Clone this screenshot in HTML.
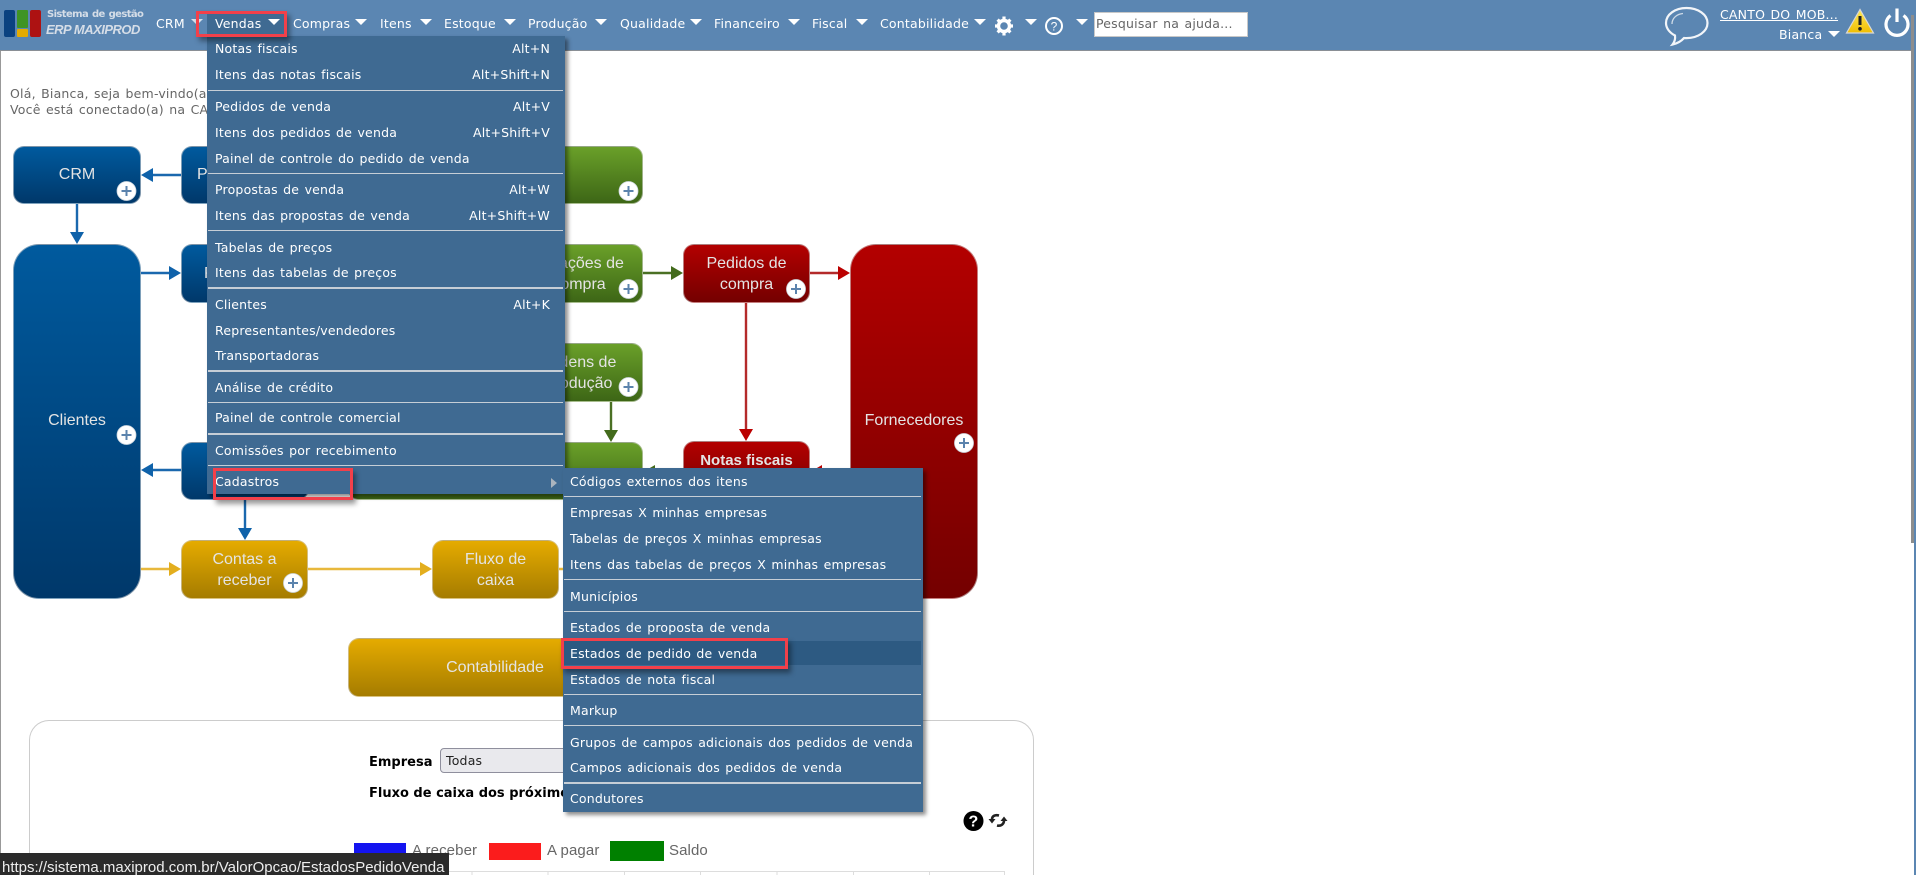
<!DOCTYPE html>
<html lang="pt-BR"><head><meta charset="utf-8"><title>ERP MAXIPROD</title>
<style>
html,body{margin:0;padding:0;width:1916px;height:875px;overflow:hidden;background:#fff}
body{position:relative;font-family:"DejaVu Sans","Liberation Sans",sans-serif;font-size:12.5px;letter-spacing:.2px;word-spacing:1.2px;color:#666}
.a{position:absolute;white-space:nowrap}
.t{position:absolute;white-space:nowrap;line-height:16px;height:16px;margin-top:-8px}
.nav{color:#fff}
.car{position:absolute;width:0;height:0;border-left:6px solid transparent;border-right:6px solid transparent;border-top:6px solid #fff;margin-left:-6px}
.m{position:absolute;background:#3f6a92;box-shadow:3px 3px 4px rgba(0,0,0,.45)}
.s{position:absolute;height:1px;background:#c6ced6}
.rb{position:absolute;box-sizing:border-box;border:3px solid #f2404a;box-shadow:3px 4px 5px rgba(0,0,0,.4)}
.b{position:absolute;box-sizing:border-box;border-radius:11px;color:#e4e4e4;font-family:"Liberation Sans",Arial,sans-serif;font-size:16px;letter-spacing:0;word-spacing:0;text-align:center;line-height:21px;border:1px solid rgba(210,210,210,.6)}
.blue{background:linear-gradient(#005a9e,#00386a)}
.green{background:linear-gradient(#6aa029,#3d6616)}
.red{background:linear-gradient(#b30000,#740000)}
.gold{background:linear-gradient(#e5ab00,#a57c00)}
.ln{position:absolute;font-size:15px;letter-spacing:.1px;word-spacing:0;font-family:"Liberation Sans",sans-serif;color:#666;line-height:20px;white-space:nowrap}
.bd{color:#000;font-weight:bold;font-size:13px;letter-spacing:0;word-spacing:0}
</style></head><body>

<!-- page frame -->
<div class="a" style="left:0;top:50px;width:1px;height:825px;background:#999"></div>

<!-- greeting -->
<div class="t" style="left:10px;top:94px">Olá, Bianca, seja bem-vindo(a)</div>
<div class="t" style="left:10px;top:110px">Você está conectado(a) na CANTO</div>

<!-- arrows -->
<svg class="a" style="left:0;top:0" width="1100" height="720" xmlns="http://www.w3.org/2000/svg">
<g fill="none" stroke-width="2.4">
<g stroke="#1a68ae">
<path d="M181 175H150M77 204V234M141 273H172M181 470H150M245 500V530"/>
</g>
<path stroke="#e8b83c" d="M141 569H172M308 569H423M559 569H600"/>
<path stroke="#4a7024" d="M643 273H674M611 402V432M683 472H652"/>
<path stroke="#b42a2a" d="M810 273H841M746 303V431M850 472H819"/>
</g>
<g fill="#0f62aa">
<path d="M141 175L153 168V182ZM77 244L70 232H84ZM181 273L169 266V280ZM141 470L153 463V477ZM245 540L238 528H252Z"/>
</g>
<path fill="#e3ae1e" d="M181 569L169 562V576ZM432 569L420 562V576Z"/>
<path fill="#436b1c" d="M683 273L671 266V280ZM611 442L604 430H618ZM643 472L655 465V479Z"/>
<path fill="#bb0000" d="M850 273L838 266V280ZM746 441L739 429H753ZM810 472L822 465V479Z"/>
</svg>

<!-- diagram boxes -->
<div class="b blue" style="left:13px;top:146px;width:128px;height:58px;line-height:56px">CRM</div>
<div class="b blue" style="left:181px;top:146px;width:128px;height:58px;line-height:56px;text-align:left;padding-left:15px">Propostas</div>
<div class="b green" style="left:348px;top:146px;width:295px;height:58px"></div>
<div class="b blue" style="left:13px;top:244px;width:128px;height:355px;border-radius:26px;line-height:352px">Clientes</div>
<div class="b blue" style="left:181px;top:244px;width:128px;height:59px;line-height:57px;text-align:left;padding-left:22px">Pedidos</div>
<div class="b green" style="left:515px;top:244px;width:128px;height:59px;padding-top:8px">Cotações de<br>compra</div>
<div class="b red" style="left:683px;top:244px;width:127px;height:59px;padding-top:8px">Pedidos de<br>compra</div>
<div class="b red" style="left:850px;top:244px;width:128px;height:355px;border-radius:26px;line-height:352px">Fornecedores</div>
<div class="b green" style="left:515px;top:343px;width:128px;height:59px;padding-top:8px">Ordens de<br>produção</div>
<div class="b blue" style="left:181px;top:442px;width:128px;height:58px"></div>
<div class="b green" style="left:348px;top:442px;width:295px;height:58px"></div>
<div class="b red" style="left:683px;top:441px;width:127px;height:59px;padding-top:8px;font-weight:bold;font-size:15px">Notas fiscais</div>
<div class="b gold" style="left:181px;top:540px;width:127px;height:59px;padding-top:8px">Contas a<br>receber</div>
<div class="b gold" style="left:432px;top:540px;width:127px;height:59px;padding-top:8px">Fluxo de<br>caixa</div>
<div class="b gold" style="left:348px;top:638px;width:294px;height:59px;line-height:57px">Contabilidade</div>

<!-- plus badges -->
<svg class="a" style="left:0;top:0" width="1100" height="620" xmlns="http://www.w3.org/2000/svg">
<defs><g id="p"><circle r="9.5" fill="#fff" stroke="#cfd8e0" stroke-width=".8"/><path d="M-5 0H5M0 -5V5" stroke="#5b83ad" stroke-width="2"/></g></defs>
<use href="#p" x="126.5" y="191"/><use href="#p" x="628.5" y="191"/><use href="#p" x="628.5" y="289"/>
<use href="#p" x="796" y="289"/><use href="#p" x="628.5" y="387"/><use href="#p" x="126.5" y="435"/>
<use href="#p" x="293" y="583"/><use href="#p" x="964" y="443"/>
</svg>

<!-- card -->
<div class="a" style="left:29px;top:720px;width:1005px;height:155px;box-sizing:border-box;border:1px solid #ccc;border-bottom:none;border-radius:20px 20px 0 0;background:#fff"></div>
<div class="t bd" style="left:369px;top:763px">Empresa</div>
<div class="a" style="left:440px;top:748px;width:180px;height:25px;box-sizing:border-box;background:#e9e9ed;border:1px solid #8f8f9d;border-radius:4px"></div>
<div class="t" style="left:446px;top:761px;color:#222">Todas</div>
<div class="t bd" style="left:369px;top:794px">Fluxo de caixa dos próximos</div>
<svg class="a" style="left:962px;top:810px" width="48" height="24" xmlns="http://www.w3.org/2000/svg">
<circle cx="11.5" cy="11" r="10" fill="#000"/>
<text x="11.5" y="16.5" text-anchor="middle" font-family="Liberation Sans" font-weight="bold" font-size="16" fill="#fff">?</text>
<path d="M30 9.500C30 6 33 4.500 37 5.500M42 10.500C42 14 39 16.500 35 15.500" fill="none" stroke="#222" stroke-width="2.600"/>
<path d="M26.500 9H33.500L30 13.500ZM38.500 11H45.500L42 6.500Z" fill="#222"/>
</svg>
<div class="a" style="left:354px;top:843px;width:52px;height:18px;background:#1414f0"></div>
<div class="ln" style="left:412px;top:841px">A receber</div>
<div class="a" style="left:489px;top:843px;width:52px;height:17px;background:#fb1c1c"></div>
<div class="ln" style="left:547px;top:841px">A pagar</div>
<div class="a" style="left:610px;top:841px;width:54px;height:20px;background:#008000"></div>
<div class="ln" style="left:669px;top:841px">Saldo</div>
<div class="a" style="left:396px;top:871px;width:609px;height:4px;border-top:1px solid #ddd;background:repeating-linear-gradient(90deg,#ddd 0,#ddd 1px,transparent 1px,transparent 76.3px);background-position:-1px 0;box-sizing:border-box"></div>

<!-- header -->
<div class="a" style="left:0;top:0;width:1916px;height:51px;background:#5b86b2;border-bottom:1px solid #8a8f95;box-sizing:border-box"></div>
<svg class="a" style="left:3px;top:9px" width="40" height="30" xmlns="http://www.w3.org/2000/svg">
<rect x="1" y="1" width="11" height="27" rx="2" fill="#0b4280"/>
<rect x="14" y="1" width="11" height="18" rx="1" fill="#3f9424"/>
<rect x="14" y="20" width="11" height="8" rx="1" fill="#e5ab00"/>
<rect x="27" y="1" width="11" height="27" rx="2" fill="#ad1212"/>
</svg>
<div class="t" style="left:47px;top:15px;color:#d5dde7;font-weight:bold;font-size:10px;letter-spacing:-.6px;word-spacing:1px">Sistema de gestão</div>
<div class="t" style="left:46px;top:30px;color:#d5dde7;font-weight:bold;font-style:italic;font-size:13px;letter-spacing:-.5px;word-spacing:0;font-family:'Liberation Sans',sans-serif">ERP MAXIPROD</div>

<div class="t nav" style="left:156px;top:24px">CRM</div><div class="car" style="left:197px;top:19px;opacity:.75"></div>
<div class="a" style="left:207px;top:13px;width:77px;height:24px;background:#3f6a92"></div>
<div class="t nav" style="left:215px;top:24px">Vendas</div><div class="car" style="left:274px;top:19px"></div>
<div class="t nav" style="left:293px;top:24px">Compras</div><div class="car" style="left:361px;top:19px"></div>
<div class="t nav" style="left:380px;top:24px">Itens</div><div class="car" style="left:426px;top:19px"></div>
<div class="t nav" style="left:444px;top:24px">Estoque</div><div class="car" style="left:510px;top:19px"></div>
<div class="t nav" style="left:528px;top:24px">Produção</div><div class="car" style="left:601px;top:19px"></div>
<div class="t nav" style="left:620px;top:24px">Qualidade</div><div class="car" style="left:696px;top:19px"></div>
<div class="t nav" style="left:714px;top:24px">Financeiro</div><div class="car" style="left:794px;top:19px"></div>
<div class="t nav" style="left:812px;top:24px">Fiscal</div><div class="car" style="left:862px;top:19px"></div>
<div class="t nav" style="left:880px;top:24px">Contabilidade</div><div class="car" style="left:980px;top:19px"></div>
<svg class="a" style="left:994px;top:15px" width="20" height="22" xmlns="http://www.w3.org/2000/svg">
<circle cx="10" cy="11" r="5.500" fill="none" stroke="#fff" stroke-width="3.400"/>
<path d="M10 1.500V5M10 17V20.500M1 11H4.500M15.500 11H19M3.600 4.600L6 7M14 15L16.400 17.400M16.400 4.600L14 7M6 15L3.600 17.400" stroke="#fff" stroke-width="3.200"/>
</svg>
<div class="car" style="left:1031px;top:19px"></div>
<svg class="a" style="left:1044px;top:15px" width="20" height="22" xmlns="http://www.w3.org/2000/svg">
<circle cx="10" cy="11" r="8" fill="none" stroke="#fff" stroke-width="2"/>
<text x="10" y="15.500" text-anchor="middle" font-family="Liberation Sans" font-size="12" fill="#fff">?</text>
</svg>
<div class="car" style="left:1082px;top:19px"></div>
<div class="a" style="left:1094px;top:12px;width:154px;height:25px;box-sizing:border-box;background:#fff;border:1px solid #c8c8c8"></div>
<div class="t" style="left:1096px;top:24px;color:#666">Pesquisar na ajuda...</div>

<svg class="a" style="left:1663px;top:5px" width="47" height="42" xmlns="http://www.w3.org/2000/svg">
<path d="M23.500 3C12 3 3 9.500 3 18C3 23.500 7 28 12 30.500C12.500 34 11.500 37 9.500 39.500C14 38.500 18 36.500 21 33C22 33.100 23 33.100 23.500 33.100C35 33.100 44.500 26.500 44.500 18C44.500 9.500 35 3 23.500 3Z" fill="none" stroke="#fff" stroke-width="2.200" opacity=".92"/>
<path d="M9 19C9 13 14 9 20 8.500" fill="none" stroke="#fff" stroke-width="1.300" opacity=".7"/>
</svg>
<div class="t" style="left:1720px;top:15px;color:#fff;text-decoration:underline">CANTO DO MOB...</div>
<div class="t" style="left:1779px;top:35px;color:#fff">Bianca</div>
<div class="car" style="left:1834px;top:31px"></div>
<svg class="a" style="left:1845px;top:8px" width="30" height="26" xmlns="http://www.w3.org/2000/svg">
<defs><linearGradient id="w" x1="0" y1="0" x2="0" y2="1"><stop offset="0" stop-color="#ffe95a"/><stop offset="1" stop-color="#f0bd00"/></linearGradient></defs>
<path d="M15 1.500L1.500 25H28.500Z" fill="url(#w)" stroke="#d8d8d8" stroke-width="1.200"/>
<path d="M15 8V17" stroke="#222" stroke-width="3"/><circle cx="15" cy="20.800" r="1.800" fill="#222"/>
</svg>
<svg class="a" style="left:1883px;top:7px" width="28" height="30" xmlns="http://www.w3.org/2000/svg">
<path d="M7.500 8.500A11 11 0 1 0 20.500 8.500" fill="none" stroke="#fff" stroke-width="3.200"/>
<path d="M14 1.500V15" stroke="#fff" stroke-width="3.200"/>
</svg>

<!-- right edge -->
<div class="a" style="left:1914px;top:0;width:2px;height:875px;background:#5b86b2"></div>
<div class="a" style="left:1911px;top:15px;width:3px;height:528px;background:#8d8d8d"></div>

<!-- status bar -->
<div class="a" style="left:0;top:853px;width:449px;height:22px;background:#2b2b2b;overflow:hidden">
<div class="a" style="left:2px;top:5px;color:#eee;letter-spacing:0;word-spacing:0;font:15px/20px 'Liberation Sans',sans-serif">https://sistema.maxiprod.com.br/ValorOpcao/EstadosPedidoVenda</div>
</div>

<!-- main menu -->
<div class="m" style="left:207px;top:36px;width:358px;height:458px"></div>
<div class="a" style="left:0;top:0;width:570px;height:500px;color:#fff">
<span class="t" style="left:215px;top:49px">Notas fiscais</span><span class="t" style="right:20px;top:49px">Alt+N</span>
<span class="t" style="left:215px;top:75px">Itens das notas fiscais</span><span class="t" style="right:20px;top:75px">Alt+Shift+N</span>
<div class="s" style="left:208px;top:90px;width:355px"></div>
<span class="t" style="left:215px;top:107px">Pedidos de venda</span><span class="t" style="right:20px;top:107px">Alt+V</span>
<span class="t" style="left:215px;top:133px">Itens dos pedidos de venda</span><span class="t" style="right:20px;top:133px">Alt+Shift+V</span>
<span class="t" style="left:215px;top:159px">Painel de controle do pedido de venda</span>
<div class="s" style="left:208px;top:173px;width:355px"></div>
<span class="t" style="left:215px;top:190px">Propostas de venda</span><span class="t" style="right:20px;top:190px">Alt+W</span>
<span class="t" style="left:215px;top:216px">Itens das propostas de venda</span><span class="t" style="right:20px;top:216px">Alt+Shift+W</span>
<div class="s" style="left:208px;top:230px;width:355px"></div>
<span class="t" style="left:215px;top:248px">Tabelas de preços</span>
<span class="t" style="left:215px;top:273px">Itens das tabelas de preços</span>
<div class="s" style="left:208px;top:287px;width:355px;height:2px"></div>
<span class="t" style="left:215px;top:305px">Clientes</span><span class="t" style="right:20px;top:305px">Alt+K</span>
<span class="t" style="left:215px;top:331px">Representantes/vendedores</span>
<span class="t" style="left:215px;top:356px">Transportadoras</span>
<div class="s" style="left:208px;top:370px;width:355px;height:2px"></div>
<span class="t" style="left:215px;top:388px">Análise de crédito</span>
<div class="s" style="left:208px;top:402px;width:355px"></div>
<span class="t" style="left:215px;top:418px">Painel de controle comercial</span>
<div class="s" style="left:208px;top:433px;width:355px;height:2px"></div>
<span class="t" style="left:215px;top:451px">Comissões por recebimento</span>
<div class="s" style="left:208px;top:465px;width:355px"></div>
<span class="t" style="left:215px;top:482px">Cadastros</span>
<div class="a" style="left:551px;top:478px;width:0;height:0;border-left:6px solid #aab4be;border-top:5px solid transparent;border-bottom:5px solid transparent"></div>
</div>

<!-- submenu -->
<div class="m" style="left:563px;top:468px;width:360px;height:344px"></div>
<div class="a" style="left:0;top:0;width:923px;height:812px;color:#fff">
<div class="a" style="left:564px;top:641px;width:357px;height:24px;background:#2d5a82"></div>
<span class="t" style="left:570px;top:482px">Códigos externos dos itens</span>
<div class="s" style="left:564px;top:496px;width:357px"></div>
<span class="t" style="left:570px;top:513px">Empresas X minhas empresas</span>
<span class="t" style="left:570px;top:539px">Tabelas de preços X minhas empresas</span>
<span class="t" style="left:570px;top:565px">Itens das tabelas de preços X minhas empresas</span>
<div class="s" style="left:564px;top:579px;width:357px"></div>
<span class="t" style="left:570px;top:597px">Municípios</span>
<div class="s" style="left:564px;top:611px;width:357px"></div>
<span class="t" style="left:570px;top:628px">Estados de proposta de venda</span>
<span class="t" style="left:570px;top:654px">Estados de pedido de venda</span>
<span class="t" style="left:570px;top:680px">Estados de nota fiscal</span>
<div class="s" style="left:564px;top:694px;width:357px"></div>
<span class="t" style="left:570px;top:711px">Markup</span>
<div class="s" style="left:564px;top:725px;width:357px"></div>
<span class="t" style="left:570px;top:743px">Grupos de campos adicionais dos pedidos de venda</span>
<span class="t" style="left:570px;top:768px">Campos adicionais dos pedidos de venda</span>
<div class="s" style="left:564px;top:782px;width:357px;height:2px"></div>
<span class="t" style="left:570px;top:799px">Condutores</span>
</div>

<!-- red highlight boxes -->
<div class="rb" style="left:196px;top:11px;width:91px;height:26px"></div>
<div class="rb" style="left:213px;top:468px;width:140px;height:32px"></div>
<div class="rb" style="left:561px;top:638px;width:227px;height:31px"></div>
</body></html>
